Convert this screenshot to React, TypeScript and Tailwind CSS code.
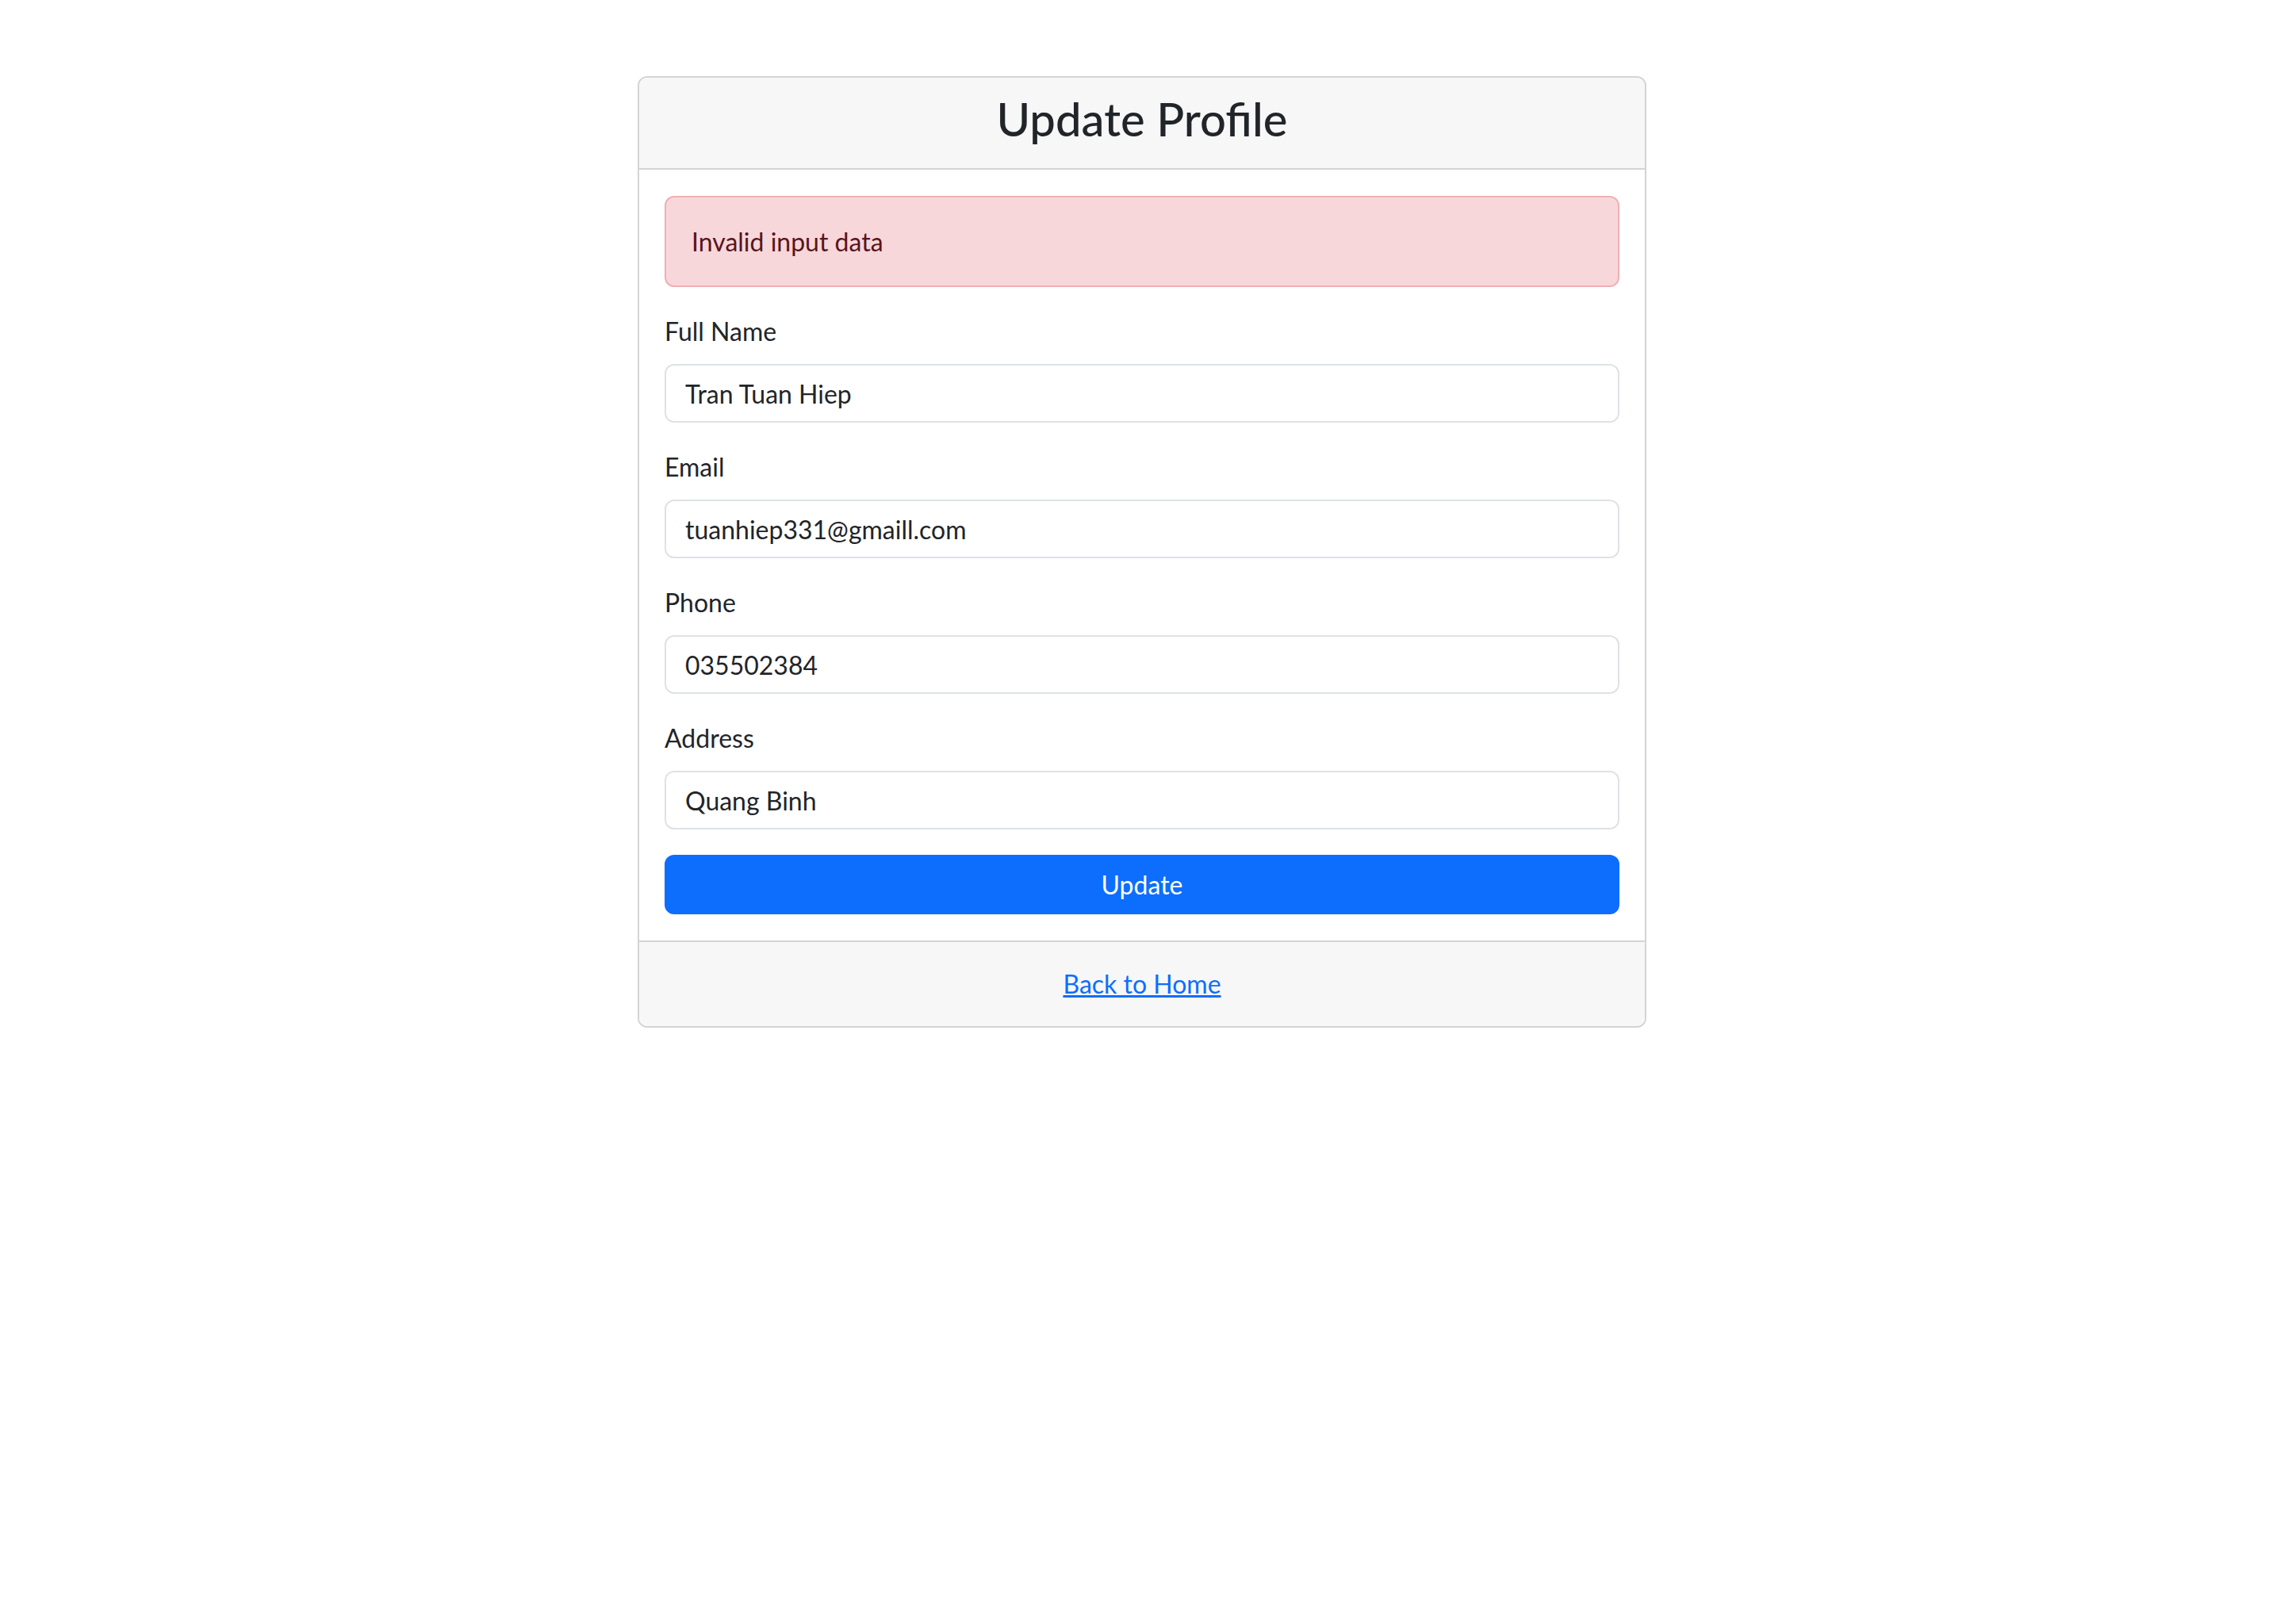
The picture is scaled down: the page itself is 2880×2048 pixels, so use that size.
import { useState } from 'react';

type Field = {
  id: string;
  label: string;
  type: string;
  value: string;
};

const initialFields: Field[] = [
  { id: 'fullName', label: 'Full Name', type: 'text', value: 'Tran Tuan Hiep' },
  { id: 'email', label: 'Email', type: 'email', value: 'tuanhiep331@gmaill.com' },
  { id: 'phone', label: 'Phone', type: 'text', value: '035502384' },
  { id: 'address', label: 'Address', type: 'text', value: 'Quang Binh' },
];

export default function App() {
  const [fields, setFields] = useState(initialFields);

  const handleChange = (id: string, value: string) => {
    setFields((prev) => prev.map((f) => (f.id === id ? { ...f, value } : f)));
  };

  return (
    <div className="min-h-screen bg-white text-[#212529] font-['Lato',sans-serif]">
      <div className="mx-auto mt-[96px] w-[1272px] overflow-hidden rounded-[12px] border-2 border-[#d4d4d4]">
        {/* Header */}
        <div className="flex h-[116px] items-center justify-center border-b-2 border-[#d4d4d4] bg-[#f7f7f7] pb-[10px]">
          <h2 className="text-[58px] font-medium leading-[70px]">Update Profile</h2>
        </div>

        {/* Body */}
        <div className="bg-white px-[32px] pt-[33px] pb-[33px]">
          <div className="mb-[32px] flex h-[115px] items-center rounded-[12px] border-2 border-[#f1aeb5] bg-[#f8d7da] px-[32px] text-[32px] leading-[48px] text-[#58151c]">
            Invalid input data
          </div>

          <form onSubmit={(e) => e.preventDefault()}>
            {fields.map((f) => (
              <div key={f.id} className="mb-[32px]">
                <label htmlFor={f.id} className="mb-[17px] block text-[32px] leading-[48px]">
                  {f.label}
                </label>
                <input
                  id={f.id}
                  type={f.type}
                  value={f.value}
                  onChange={(e) => handleChange(f.id, e.target.value)}
                  className="block h-[74px] w-full rounded-[12px] border-2 border-[#dee2e6] bg-white px-[24px] text-[32px] text-[#212529] outline-none"
                />
              </div>
            ))}
            <button
              type="submit"
              className="block h-[75px] w-full rounded-[12px] border-2 border-[#0d6efd] bg-[#0d6efd] text-[32px] leading-[48px] text-white"
            >
              Update
            </button>
          </form>
        </div>

        {/* Footer */}
        <div className="flex h-[108px] items-center justify-center border-t-2 border-[#d4d4d4] bg-[#f7f7f7]">
          <a href="#" className="text-[32px] leading-[48px] text-[#0d6efd] underline">
            Back to Home
          </a>
        </div>
      </div>
    </div>
  );
}
